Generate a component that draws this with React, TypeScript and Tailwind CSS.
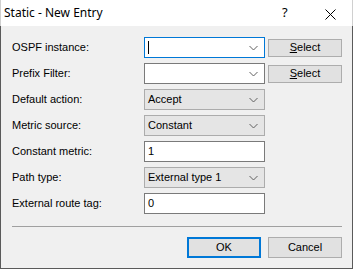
import React from "react";

const Chevron = () => (
  <svg width="9" height="6" viewBox="0 0 9 6" className="shrink-0">
    <path d="M0.5 1 L4.5 5 L8.5 1" fill="none" stroke="#606060" strokeWidth="1" />
  </svg>
);

const Label = ({ children }: { children: React.ReactNode }) => (
  <div className="w-[132px] shrink-0 text-[11px] leading-none text-black">{children}</div>
);

const EditCombo = ({ focused }: { focused?: boolean }) => (
  <div
    className={`w-[121px] h-[21px] bg-white border flex items-center pl-[3px] pr-[6px] ${
      focused ? "border-[#0078d7]" : "border-[#7a7a7a]"
    }`}
  >
    <div className="flex-1 flex items-center">
      {focused && <div className="w-[1px] h-[13px] bg-black" />}
    </div>
    <Chevron />
  </div>
);

const DropCombo = ({ value }: { value: string }) => (
  <div className="w-[121px] h-[21px] bg-[#e5e5e5] border border-[#acacac] flex items-center pl-[3px] pr-[6px]">
    <div className="flex-1 text-[11px] leading-none text-black">{value}</div>
    <Chevron />
  </div>
);

const TextBox = ({ value }: { value: string }) => (
  <div className="w-[121px] h-[21px] bg-white border border-[#7a7a7a] flex items-center pl-[3px]">
    <div className="text-[11px] leading-none text-black">{value}</div>
  </div>
);

const SelectBtn = () => (
  <div className="ml-[3px] w-[74px] h-[18px] bg-[#e1e1e1] border border-[#adadad] flex items-center justify-center text-[11px] leading-none text-black">
    <span>
      <span className="underline">S</span>elect
    </span>
  </div>
);

export default function App() {
  return (
    <div
      className="w-[353px] h-[269px] flex flex-col bg-white"
      style={{ fontFamily: '"Liberation Sans", Arial, sans-serif' }}
    >
      <div className="h-[26px] shrink-0 bg-white flex items-center relative border-l border-r border-[#d0d0d0]">
        <div
          className="pl-[3px] text-[12px] text-black"
          style={{ fontFamily: '"Noto Sans", "Open Sans", sans-serif' }}
        >
          Static - New Entry
        </div>
        <div
          className="absolute left-[281px] top-[3px] text-[13px] text-black"
          style={{ fontFamily: '"Noto Sans", sans-serif' }}
        >
          ?
        </div>
        <svg className="absolute left-[324px] top-[9px]" width="11" height="11" viewBox="0 0 11 11">
          <path d="M0.5 0.5 L10.5 10.5 M10.5 0.5 L0.5 10.5" stroke="#000" strokeWidth="1" />
        </svg>
      </div>
      <div className="flex-1 bg-[#f0f0f0] border-l border-r border-b border-[#5a5a5a] flex flex-col pl-[11px] pt-[11px]">
        <div className="flex flex-col gap-[5px]">
          <div className="flex items-center h-[21px]">
            <Label>OSPF instance:</Label>
            <EditCombo focused />
            <SelectBtn />
          </div>
          <div className="flex items-center h-[21px]">
            <Label>Prefix Filter:</Label>
            <EditCombo />
            <SelectBtn />
          </div>
          <div className="flex items-center h-[21px]">
            <Label>Default action:</Label>
            <DropCombo value="Accept" />
          </div>
          <div className="flex items-center h-[21px]">
            <Label>Metric source:</Label>
            <DropCombo value="Constant" />
          </div>
          <div className="flex items-center h-[21px]">
            <Label>Constant metric:</Label>
            <TextBox value="1" />
          </div>
          <div className="flex items-center h-[21px]">
            <Label>Path type:</Label>
            <DropCombo value="External type 1" />
          </div>
          <div className="flex items-center h-[21px]">
            <Label>External route tag:</Label>
            <TextBox value="0" />
          </div>
        </div>
        <div className="mt-[12px] w-[330px] h-[1px] bg-[#a0a0a0]" />
        <div className="mt-[10px] flex justify-end gap-[7px] pr-[10px]">
          <div className="w-[74px] h-[21px] bg-[#e1e1e1] border-2 border-[#0078d7] flex items-center justify-center text-[11px] leading-none text-black">
            OK
          </div>
          <div className="w-[74px] h-[21px] bg-[#e1e1e1] border border-[#adadad] flex items-center justify-center text-[11px] leading-none text-black">
            Cancel
          </div>
        </div>
      </div>
    </div>
  );
}
